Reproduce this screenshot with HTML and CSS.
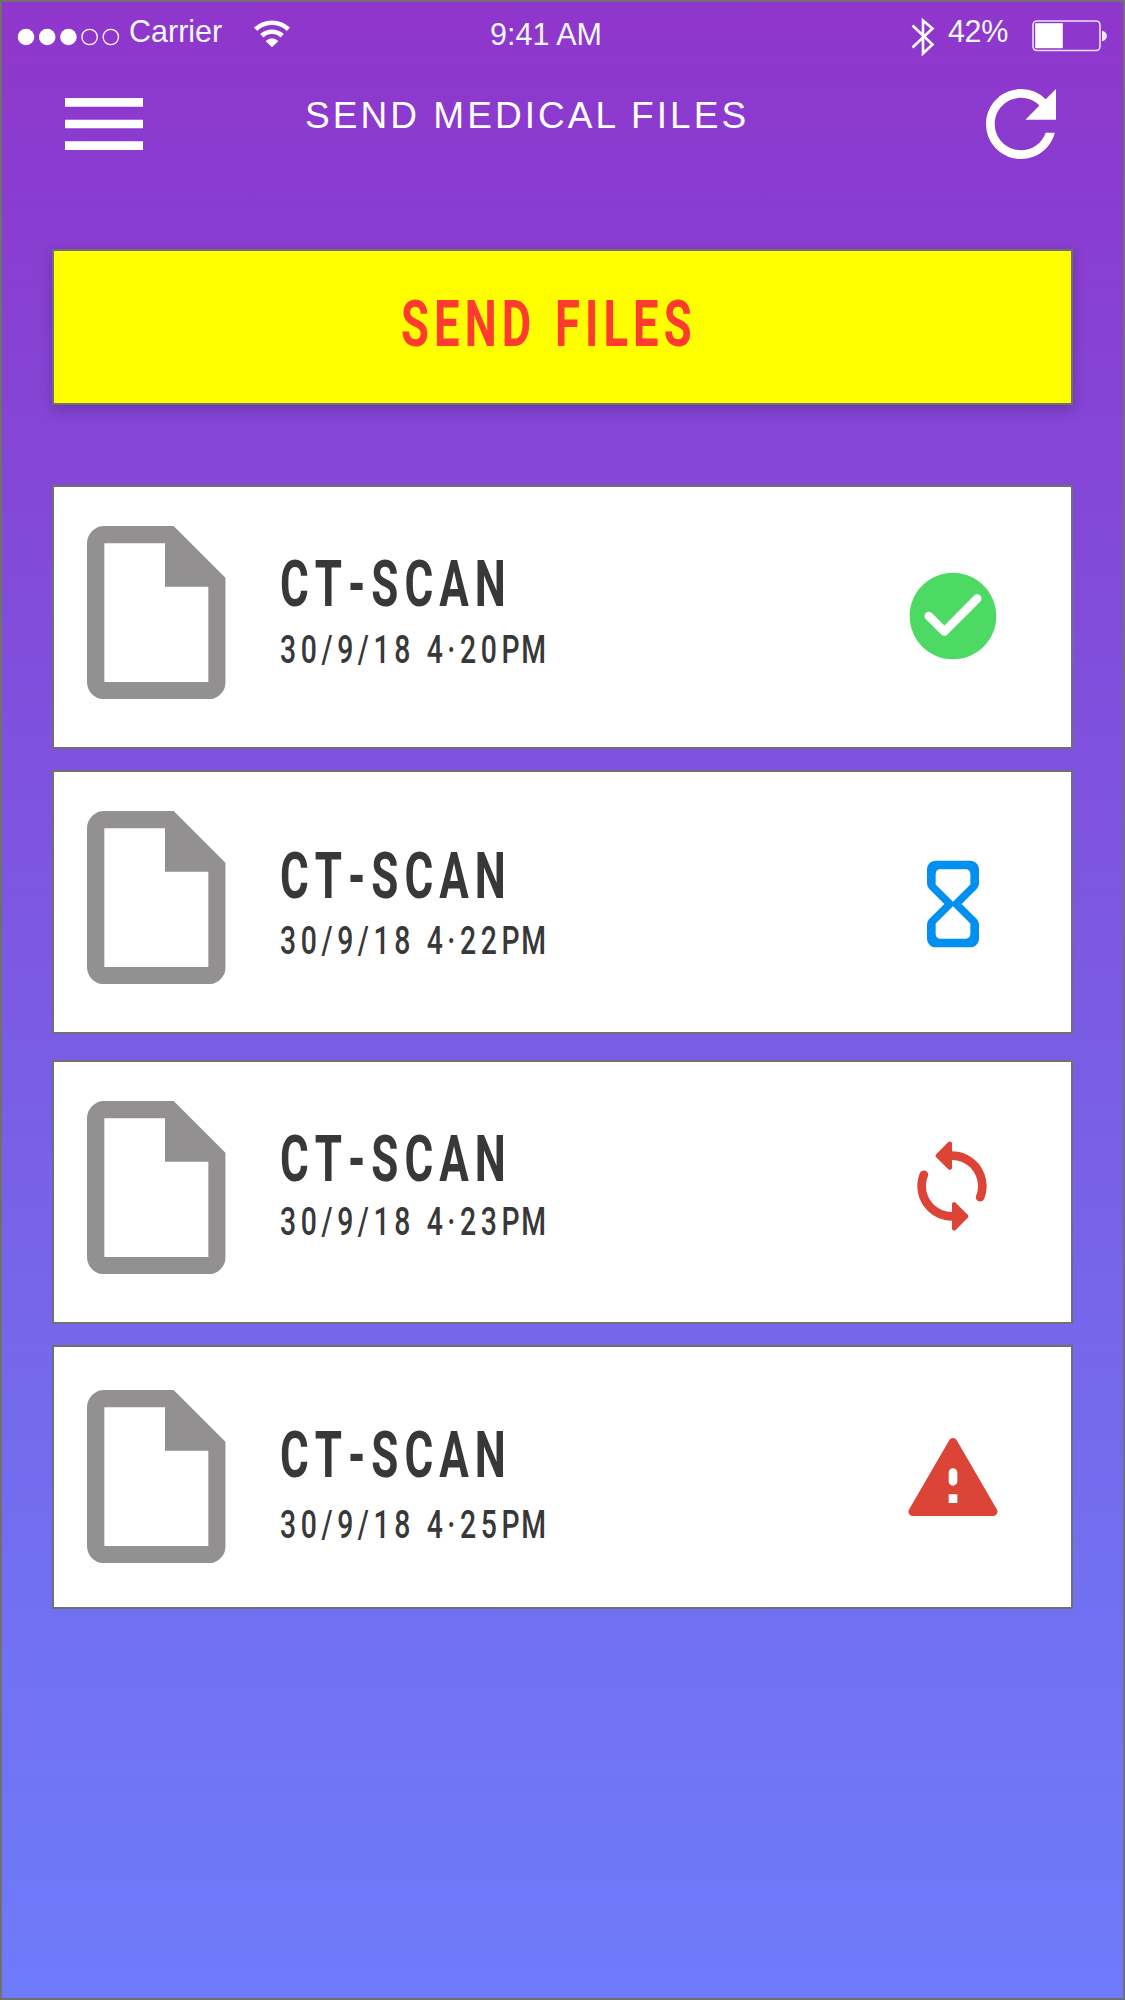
FILE: index.html
```html
<!DOCTYPE html>
<html lang="en">
<head>
<meta charset="utf-8">
<title>Send Medical Files</title>
<link rel="stylesheet" href="styles.css">
</head>
<body>
<svg class="sprite" width="0" height="0" aria-hidden="true">
  <symbol id="file" viewBox="4 2 16 20"><path d="M6 2c-1.1 0-2 .9-2 2v16c0 1.1.9 2 2 2h12c1.1 0 2-.9 2-2V8l-6-6H6zM6 4h7v5h5v11H6V4z" fill-rule="evenodd"/></symbol>
</svg>
<main class="screen">
  <header class="status-bar">
    <svg class="signal" viewBox="0 0 104 18" width="104" height="18" fill="#fff">
      <circle cx="9" cy="9" r="8.3"/><circle cx="30.2" cy="9" r="8.3"/><circle cx="51.4" cy="9" r="8.3"/>
      <g fill="none" stroke="#fff" stroke-width="1.3"><circle cx="72.6" cy="9" r="7.7"/><circle cx="93.8" cy="9" r="7.7"/></g>
    </svg>
    <span class="carrier">Carrier</span>
    <svg class="wifi" viewBox="0 0 36 28" width="36" height="28" fill="none" stroke="#fff" stroke-width="4.6">
      <path d="M1.6 9.2a24 24 0 0 1 32.8 0M7.8 15.8a15 15 0 0 1 20.4 0"/>
      <path d="M11.6 20.9q6.4-5.2 12.8 0L18 27.2z" fill="#fff" stroke="none"/>
    </svg>
    <span class="clock">9:41 AM</span>
    <svg class="bluetooth" viewBox="0 0 24 40" width="24" height="40" fill="none" stroke="#fff" stroke-width="2.6">
      <path d="M1.5 8.5 21.5 27.5 12 36.5V3.5L21.5 11.5 1.5 30.5"/>
    </svg>
    <span class="percent">42%</span>
    <svg class="battery" viewBox="0 0 76 32" width="76" height="32">
      <rect x="1" y="1" width="67" height="29.5" rx="4" fill="none" stroke="#fff" stroke-opacity=".85" stroke-width="1.6"/>
      <rect x="3.2" y="3.2" width="27.6" height="25" fill="#fff"/>
      <path d="M70 10.8c6.5 1 6.5 9.400 0 10.400z" fill="#fff" fill-opacity=".9"/>
    </svg>
  </header>
  <nav class="nav-bar">
    <svg class="menu" viewBox="3 6 18 12" width="78" height="52" fill="#fff"><path d="M3 18h18v-2H3v2zm0-5h18v-2H3v2zm0-7v2h18V6H3z"/></svg>
    <h1 class="page-title">SEND MEDICAL FILES</h1>
    <svg class="refresh" viewBox="4 4 16 16" width="70" height="70" fill="#fff"><path d="M17.650 6.350A7.958 7.958 0 0 0 12 4c-4.420 0-7.990 3.580-7.990 8s3.570 8 7.990 8c3.730 0 6.840-2.550 7.730-6h-2.080A5.990 5.990 0 0 1 12 18c-3.310 0-6-2.690-6-6s2.690-6 6-6c1.660 0 3.140.690 4.220 1.780L13 11h7V4l-2.350 2.350z"/></svg>
  </nav>
  <button class="send" type="button"><span class="send-label">SEND FILES</span></button>
  <section class="files">
    <article class="card card-done">
      <svg class="file-icon"><use href="#file"/></svg>
      <div class="info"><h2 class="name">CT-SCAN</h2><p class="date">30/9/18 4·20<span class="meridiem">PM</span></p></div>
      <svg class="state" viewBox="0 0 24 24"><path d="M12 2C6.480 2 2 6.480 2 12s4.480 10 10 10 10-4.480 10-10S17.520 2 12 2zM9.290 16.290L5.700 12.700c-.39-.39-.39-1.020 0-1.410.39-.39 1.020-.39 1.410 0L10 14.170l6.880-6.880c.39-.39 1.020-.39 1.410 0 .39.39.39 1.020 0 1.410l-7.590 7.590c-.38.39-1.020.39-1.410 0z"/></svg>
    </article>
    <article class="card card-pending">
      <svg class="file-icon"><use href="#file"/></svg>
      <div class="info"><h2 class="name">CT-SCAN</h2><p class="date">30/9/18 4·22<span class="meridiem">PM</span></p></div>
      <svg class="state" viewBox="0 0 24 24"><path d="M6 4v3.170c0 .53.21 1.040.59 1.420L10 12l-3.420 3.420c-.37.38-.58.89-.58 1.420V20c0 1.100.9 2 2 2h8c1.100 0 2-.9 2-2v-3.160c0-.53-.21-1.040-.58-1.410L14 12l3.410-3.400c.38-.38.59-.89.59-1.420V4c0-1.100-.9-2-2-2H8c-1.100 0-2 .9-2 2zm10 12.500V19c0 .55-.45 1-1 1H9c-.55 0-1-.45-1-1v-2.500l4-4 4 4zm-4-5l-4-4V5c0-.55.45-1 1-1h6c.55 0 1 .45 1 1v2.500l-4 4z"/></svg>
    </article>
    <article class="card card-retry">
      <svg class="file-icon"><use href="#file"/></svg>
      <div class="info"><h2 class="name">CT-SCAN</h2><p class="date">30/9/18 4·23<span class="meridiem">PM</span></p></div>
      <svg class="state" viewBox="0 0 24 24"><path d="M12 4V2.210c0-.45-.54-.67-.85-.35l-2.800 2.790c-.2.2-.2.51 0 .71l2.790 2.790c.32.31.86.09.86-.36V6c3.310 0 6 2.690 6 6 0 .79-.15 1.560-.44 2.250-.15.36-.04.77.23 1.040.51.51 1.370.33 1.640-.34.37-.91.57-1.910.57-2.950 0-4.420-3.580-8-8-8zm0 14c-3.310 0-6-2.690-6-6 0-.79.15-1.560.44-2.250.15-.36.04-.77-.23-1.040-.51-.51-1.370-.33-1.640.34C4.200 9.960 4 10.960 4 12c0 4.420 3.580 8 8 8v1.790c0 .45.54.67.85.35l2.790-2.790c.2-.2.2-.51 0-.71l-2.790-2.790c-.31-.31-.85-.09-.85.36V18z"/></svg>
    </article>
    <article class="card card-failed">
      <svg class="file-icon"><use href="#file"/></svg>
      <div class="info"><h2 class="name">CT-SCAN</h2><p class="date">30/9/18 4·25<span class="meridiem">PM</span></p></div>
      <svg class="state" viewBox="0 0 24 24"><path d="M2.730 21h18.530c.77 0 1.250-.83.87-1.500l-9.270-16c-.39-.67-1.350-.67-1.730 0l-9.270 16c-.38.67.1 1.500.87 1.500zM13 18h-2v-2h2v2zm-1-4c-.55 0-1-.45-1-1v-2c0-.55.45-1 1-1s1 .45 1 1v2c0 .55-.45 1-1 1z"/></svg>
    </article>
  </section>
</main>
</body>
</html>
```
FILE: styles.css
```css
* { box-sizing: border-box; }
body { margin: 0; }
h1, h2, p { margin: 0; font-weight: 400; }
svg { display: block; flex: none; }
.sprite { position: absolute; }

.screen {
  width: 1125px;
  height: 2000px;
  border: 2px solid #707070;
  background: linear-gradient(#9036cc 0%, #8a3bcf 8%, #7f51de 37%, #7270f2 80%, #6e7bfa 100%);
  overflow: hidden;
}

.status-bar {
  display: flex;
  align-items: flex-start;
  height: 60px;
  padding-left: 15px;
  font: 30.5px/30px "Liberation Sans", Arial, sans-serif;
  color: #f0f8ff;
  white-space: nowrap;
}
.signal { margin-top: 26px; }
.carrier { width: 125px; margin: 14px 0 0 8px; }
.wifi { margin-top: 18px; }
.clock { width: 421px; margin: 17px 0 0 200px; }
.bluetooth { margin-top: 15px; }
.percent { width: 84px; margin: 14px 0 0 13px; letter-spacing: -.4px; }
.battery { margin-top: 18px; }

.nav-bar {
  display: flex;
  align-items: flex-start;
  height: 187px;
  padding-left: 63px;
}
.menu { margin-top: 36px; }
.page-title {
  width: 681px;
  margin: 34px 0 0 162px;
  font: 37px/40px "Liberation Sans", Arial, sans-serif;
  letter-spacing: 3.05px;
  color: #fff;
  white-space: nowrap;
}
.refresh { margin-top: 27px; }

.send {
  display: block;
  width: 1021px;
  height: 156px;
  margin: 0 0 80px 50px;
  padding: 49px 0 0 347px;
  border: 2px solid #707070;
  background: #ff0;
  box-shadow: 0 5px 12px rgba(0, 0, 0, .2);
  color: #ff3b30;
  text-align: left;
  vertical-align: top;
}
.send-label, .name, .date {
  display: block;
  font-family: Roboto, sans-serif;
  transform-origin: 0 50%;
  white-space: nowrap;
}
.send-label {
  height: 101px;
  font-size: 64.7px;
  font-weight: 700;
  line-height: 46px;
  letter-spacing: 7.4px;
  word-spacing: 3px;
  transform: scaleX(.7);
}

.files { padding-left: 50px; }
.card {
  display: flex;
  align-items: flex-start;
  width: 1021px;
  height: 264px;
  margin-bottom: 21px;
  padding-left: 33px;
  border: 2px solid #707070;
  background: #fff;
}
.file-icon { width: 138.670px; height: 173.330px; margin-top: 39px; fill: #929091; }
.info { width: 621px; margin: 74px 0 0 54px; color: #383838; }
.name {
  font-size: 64.7px;
  font-weight: 700;
  font-kerning: none;
  line-height: 46px;
  letter-spacing: 8.8px;
  transform: scaleX(.68);
}
.date {
  margin-top: 29px;
  font-size: 39.4px;
  font-weight: 500;
  line-height: 28px;
  letter-spacing: 6.4px;
  transform: scaleX(.72);
}
.meridiem { letter-spacing: 2.5px; }
.state { width: 104px; height: 104px; }

.card-done .state { margin-top: 77px; fill: #4cd964; }

.card-pending { margin-bottom: 26px; }
.card-pending .info { margin-top: 81px; }
.card-pending .date { margin-top: 28px; }
.card-pending .state { margin-top: 80px; fill: #0290f0; }

.card-retry .date { margin-top: 26px; }
.card-retry .state { margin: 72px 0 0 -1px; fill: #db4437; }

.card-failed .file-icon { margin-top: 43px; }
.card-failed .info { margin-top: 85px; }
.card-failed .date { margin-top: 33px; }
.card-failed .state { margin-top: 78px; fill: #db4437; }
```
